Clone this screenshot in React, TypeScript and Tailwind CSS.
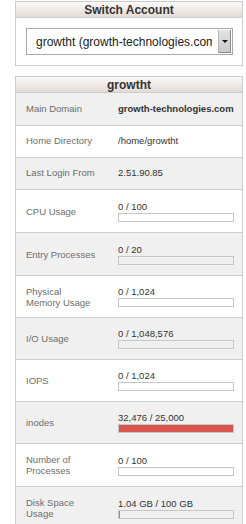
import React from 'react';

type Limit = {
  label: string[];
  used: string;
  pct: number;
  color?: string;
  h: string;
};

const info = [
  { label: 'Main Domain', value: 'growth-technologies.com', bold: true },
  { label: 'Home Directory', value: '/home/growtht' },
  { label: 'Last Login From', value: '2.51.90.85' },
];

const limits: Limit[] = [
  { label: ['CPU Usage'], used: '0 / 100', pct: 0, h: 'h-[43px]' },
  { label: ['Entry Processes'], used: '0 / 20', pct: 0, h: 'h-[43px]' },
  { label: ['Physical', 'Memory Usage'], used: '0 / 1,024', pct: 0, h: 'h-[42px]' },
  { label: ['I/O Usage'], used: '0 / 1,048,576', pct: 0, h: 'h-[42px]' },
  { label: ['IOPS'], used: '0 / 1,024', pct: 0, h: 'h-[42px]' },
  { label: ['inodes'], used: '32,476 / 25,000', pct: 100, color: 'bg-[#d9534f]', h: 'h-[42px]' },
  { label: ['Number of', 'Processes'], used: '0 / 100', pct: 0, h: 'h-[43px]' },
  { label: ['Disk Space', 'Usage'], used: '1.04 GB / 100 GB', pct: 1, color: 'bg-[#5cb85c]', h: 'h-[43px]' },
];

function Header({ title }: { title: string }) {
  return (
    <div className="h-[16px] flex items-center justify-center border-b border-[#cccccc] bg-gradient-to-b from-[#fbfaf9] to-[#e4dbd6] text-[12px] font-bold leading-none text-[#333333]">
      {title}
    </div>
  );
}

export default function App() {
  const rowBg = (i: number) => (i % 2 === 0 ? 'bg-[#f0f0f0]' : 'bg-white');

  return (
    <div className="pl-[15px] pr-[3px] pt-[1px] bg-white min-h-screen" style={{ fontFamily: '"Liberation Sans", Arial, sans-serif' }}>
      {/* switch account */}
      <div className="border border-[#cccccc] bg-white">
        <Header title="Switch Account" />
        <div className="pl-[10px] pr-[9px] pt-[10px] pb-[10px]">
          <div className="h-[27px] w-[207px] flex items-center border border-[#a9a9a9] bg-white pl-[9px] pr-[1px] overflow-hidden">
            <div className="flex-1 min-w-0 mr-[6px] overflow-hidden whitespace-nowrap text-[12px] text-[#222222] leading-[14px]">
              growtht (growth-technologies.com)
            </div>
            <div className="shrink-0 w-[13px] h-[23px] flex items-center justify-center bg-gradient-to-b from-[#e4e4e4] to-[#c9c9c9] border-l border-[#b5b5b5] border-r border-b border-r-[#8a8a8a] border-b-[#8a8a8a]">
              <div className="w-0 h-0 border-l-[3px] border-r-[3px] border-t-[3px] border-l-transparent border-r-transparent border-t-[#111111]" />
            </div>
          </div>
        </div>
      </div>

      {/* account details */}
      <div className="mt-[10px] border border-[#cccccc] bg-white">
        <Header title="growtht" />
        {info.map((r, i) => (
          <div key={r.label} className={`flex items-center h-[32px] ${i > 0 ? 'border-t border-[#cccccc]' : ''} ${rowBg(i)}`}>
            <div className="w-[102px] pl-[10px] text-[9.5px] text-[#6e6e6e]">{r.label}</div>
            <div className={`text-[9.5px] text-[#333333] ${r.bold ? 'font-bold' : ''}`}>{r.value}</div>
          </div>
        ))}
        {limits.map((r, i) => (
          <div key={r.label.join(' ')} className={`flex items-center ${r.h} border-t border-[#cccccc] ${rowBg(i + 1)}`}>
            <div className="w-[102px] pl-[10px] text-[9.5px] leading-[11px] text-[#6e6e6e]">
              {r.label.map((l) => (
                <div key={l}>{l}</div>
              ))}
            </div>
            <div className="flex flex-col">
              <div className="text-[9.5px] leading-[11px] text-[#333333]">{r.used}</div>
              <div className="mt-[1px] w-[116px] h-[9px] border border-[#c6c6c6] overflow-hidden">
                {r.pct > 0 && <div className={`h-full ${r.color}`} style={{ width: `${r.pct}%` }} />}
              </div>
            </div>
          </div>
        ))}
      </div>
    </div>
  );
}
